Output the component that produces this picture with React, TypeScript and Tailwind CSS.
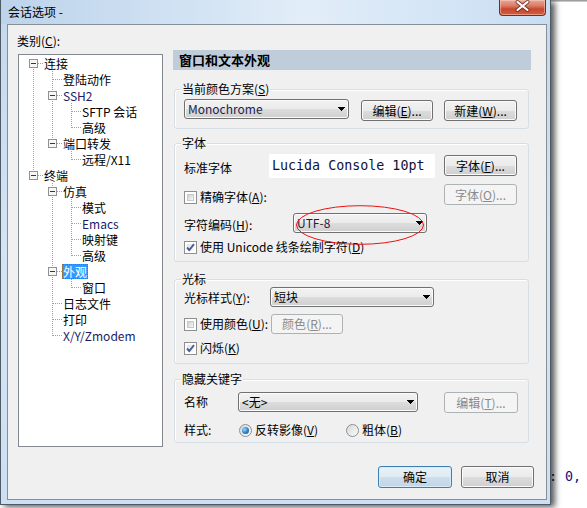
import React from "react";

type CellKind = "line" | "blank" | "tee" | "ell" | "first";

interface TreeItem {
  t: string;
  g: CellKind[];
  c: CellKind;
  exp?: boolean;
  sel?: boolean;
  latin?: boolean;
}

const TREE: TreeItem[] = [
  { t: "连接", g: [], c: "first", exp: true },
  { t: "登陆动作", g: ["line"], c: "tee" },
  { t: "SSH2", g: ["line"], c: "tee", exp: true, latin: true },
  { t: "SFTP 会话", g: ["line", "line"], c: "tee" },
  { t: "高级", g: ["line", "line"], c: "ell" },
  { t: "端口转发", g: ["line"], c: "ell", exp: true },
  { t: "远程/X11", g: ["line", "blank"], c: "ell" },
  { t: "终端", g: [], c: "ell", exp: true },
  { t: "仿真", g: ["blank"], c: "tee", exp: true },
  { t: "模式", g: ["blank", "line"], c: "tee" },
  { t: "Emacs", g: ["blank", "line"], c: "tee", latin: true },
  { t: "映射键", g: ["blank", "line"], c: "tee" },
  { t: "高级", g: ["blank", "line"], c: "ell" },
  { t: "外观", g: ["blank"], c: "tee", exp: true, sel: true },
  { t: "窗口", g: ["blank", "line"], c: "ell" },
  { t: "日志文件", g: ["blank"], c: "tee" },
  { t: "打印", g: ["blank"], c: "tee" },
  { t: "X/Y/Zmodem", g: ["blank"], c: "ell", latin: true },
];

function Cell({ kind, exp }: { kind: CellKind; exp?: boolean }) {
  const s = { stroke: "#a0a0a0", strokeDasharray: "1 1", strokeWidth: 1 };
  return (
    <svg width="19" height="16" className="block flex-none" shapeRendering="crispEdges">
      {(kind === "line" || kind === "tee") && <line x1="9.5" y1="0" x2="9.5" y2="16" {...s} />}
      {kind === "ell" && <line x1="9.5" y1="0" x2="9.5" y2="9" {...s} />}
      {kind === "first" && <line x1="9.5" y1="8" x2="9.5" y2="16" {...s} />}
      {(kind === "tee" || kind === "ell" || kind === "first") && (
        <line x1="10" y1="8.5" x2="19" y2="8.5" {...s} />
      )}
      {exp && (
        <g>
          <rect x="5.5" y="4.5" width="8" height="8" fill="#f6f6f6" stroke="#919191" />
          <line x1="7" y1="8.5" x2="12" y2="8.5" stroke="#24347a" />
        </g>
      )}
    </svg>
  );
}

function Mn({ k }: { k: string }) {
  return (
    <>
      (<span className="underline">{k}</span>)
    </>
  );
}

const btnNormal =
  "flex flex-none items-center justify-center rounded-[3px] border border-[#707070] bg-[linear-gradient(to_bottom,#f2f2f2_0%,#ebebeb_50%,#dddddd_50%,#cfcfcf_100%)] shadow-[inset_0_0_0_1px_#fbfbfb] text-black";
const btnDisabled =
  "flex flex-none items-center justify-center rounded-[3px] border border-[#adb2b5] bg-[#f4f4f4] text-[#8a8a8a]";
const comboCls =
  "relative flex flex-none items-center h-[20px] rounded-[3px] border border-[#707070] bg-[linear-gradient(to_bottom,#f2f2f2_0%,#ebebeb_50%,#dddddd_50%,#cfcfcf_100%)] shadow-[inset_0_0_0_1px_#fbfbfb] pl-[3px]";

function Arrow() {
  return (
    <svg width="7" height="4" className="ml-auto mr-[3px] flex-none" shapeRendering="crispEdges">
      <path d="M0 0H7L3.5 4Z" fill="#000" />
    </svg>
  );
}

function Check({ checked }: { checked?: boolean }) {
  return (
    <div className="relative flex-none w-[13px] h-[13px] border border-[#8e8f8f] bg-white p-[2px]">
      <div
        className={
          checked
            ? "w-full h-full bg-[linear-gradient(135deg,#dfe3e8,#fbfbfb)]"
            : "w-full h-full border border-[#c4c8cc] bg-[linear-gradient(135deg,#cdd1d6,#f7f7f7)]"
        }
      />
      {checked && (
        <svg width="13" height="13" className="absolute left-[-1px] top-[-1px]">
          <path d="M3 6.5L5.3 9L10 3.2" fill="none" stroke="#4a5d93" strokeWidth="1.9" />
        </svg>
      )}
    </div>
  );
}

function Radio({ checked }: { checked?: boolean }) {
  return (
    <div className="flex flex-none items-center justify-center w-[13px] h-[13px] rounded-full border border-[#8e8f8f] bg-[linear-gradient(135deg,#d5d8dc,#fbfbfb)]">
      {checked && (
        <div className="w-[7px] h-[7px] rounded-full bg-[radial-gradient(circle_at_35%_35%,#9ad8f8_0%,#2a7fc4_55%,#0b4f90_100%)]" />
      )}
    </div>
  );
}

function Group({
  label,
  className,
  children,
}: {
  label: React.ReactNode;
  className: string;
  children: React.ReactNode;
}) {
  return (
    <div
      className={
        "relative flex-none rounded-[3px] border border-[#d5dfe5] shadow-[inset_1px_1px_0_#ffffff] " +
        className
      }
    >
      <span className="absolute left-[6px] top-[-9px] px-[1px] bg-[#f0f0f0] leading-[16px] whitespace-nowrap">
        {label}
      </span>
      {children}
    </div>
  );
}

export default function App() {
  return (
    <div className="relative w-[587px] h-[508px] overflow-hidden bg-white font-['Noto_Sans_CJK_SC','Noto_Sans',sans-serif] text-[12px] leading-[16px] text-black">
      {/* background window edge and text */}
      <div className="absolute top-0 left-[551px] right-0 h-[2px] bg-[linear-gradient(to_bottom,#8a8a8a,#dcdcdc)]" />
      <div className="absolute left-[549px] top-[469px] font-['DejaVu_Sans_Mono',monospace] text-[13.33px] leading-[16px] text-[#101080] whitespace-pre">
        : 0,
      </div>

      {/* dialog window */}
      <div className="relative z-10 flex flex-col w-[551px] h-[505px] border-x border-b border-[#4e5a66] bg-[linear-gradient(to_bottom,#c3d8ee,#d3e4f5_50%,#cde0f3)] shadow-[4px_2px_6px_rgba(0,0,0,0.65)]">
        {/* title bar */}
        <div className="flex items-start h-[24px] flex-none bg-[linear-gradient(to_right,#bdd3ea_0%,#d2e3f4_35%,#e2edf8_55%,#d4e5f6_80%,#c9ddf1_100%)]">
          <span className="pl-[7px] mt-[4px] whitespace-nowrap">会话选项 -</span>
          <div className="ml-auto mr-[4px] w-[47px] h-[16px] rounded-b-[4px] border border-t-0 border-[#7c2a1b] bg-[linear-gradient(to_bottom,#e9a898_0%,#d97a63_40%,#c8472c_60%,#d05f40_100%)] shadow-[inset_0_0_0_1px_rgba(255,210,200,0.5)]">
            <svg width="45" height="15" className="block">
              <path d="M17.5 2L27.5 10M27.5 2L17.5 10" stroke="#5a1a0e" strokeWidth="4" strokeLinecap="round" opacity="0.7" />
              <path d="M17.5 2L27.5 10M27.5 2L17.5 10" stroke="#ffffff" strokeWidth="2.2" strokeLinecap="round" />
            </svg>
          </div>
        </div>

        {/* client area */}
        <div className="flex ml-[6px] w-[540px] h-[476px] flex-none border border-[#868e96] bg-[#f0f0f0]">
          {/* left column */}
          <div className="flex flex-col flex-none pl-[10px] pt-[8px]">
            <span className="ml-[-1px] whitespace-nowrap">
              类别<Mn k="C" />:
            </span>
            <div className="mt-[5px] w-[145px] h-[393px] border border-[#828790] bg-white pt-0 pl-[5px] flex flex-col">
              {TREE.map((it, i) => (
                <div key={i} className="flex items-center h-[16px]">
                  {it.g.map((k, j) => (
                    <Cell key={j} kind={k} />
                  ))}
                  <Cell kind={it.c} exp={it.exp} />
                  <span
                    className={
                      it.sel
                        ? "h-[15px] leading-[15px] px-[1px] whitespace-nowrap bg-[#3399ff] text-white outline-1 outline-dotted outline-[#8a6a3a] -outline-offset-1"
                        : it.latin
                        ? "h-[15px] leading-[15px] px-[1px] whitespace-nowrap text-[#1c1c66]"
                        : "h-[15px] leading-[15px] px-[1px] whitespace-nowrap"
                    }
                  >
                    {it.t}
                  </span>
                </div>
              ))}
            </div>
          </div>

          {/* right column */}
          <div className="flex flex-col flex-none ml-[10px] w-[362px] pt-[25px]">
            <div className="flex items-center h-[20px] w-[358px] flex-none bg-[#bfcddb] pl-[6px] font-bold text-[13px]">
              窗口和文本外观
            </div>

            {/* colour scheme */}
            <Group
              label={
                <>
                  当前颜色方案<Mn k="S" />
                </>
              }
              className="mt-[19px] ml-[1px] w-[355px] h-[40px] pl-[9px] pt-[9px] flex items-start"
            >
              <div className={comboCls + " w-[165px] text-[#1c1c50]"}>
                <span>Monochrome</span>
                <Arrow />
              </div>
              <div className={btnNormal + " ml-[12px] mt-[1px] w-[72px] h-[21px]"}>
                编辑<Mn k="E" />...
              </div>
              <div className={btnNormal + " ml-[11px] mt-[1px] w-[73px] h-[21px]"}>
                新建<Mn k="W" />...
              </div>
            </Group>

            {/* font */}
            <Group label="字体" className="mt-[14px] ml-[1px] w-[355px] h-[119px] pl-[9px] flex flex-col">
              <div className="flex mt-[10px] h-[24px]">
                <span className="w-[85px] flex-none mt-[6px]">标准字体</span>
                <div className="flex items-center w-[166px] h-[24px] flex-none bg-white pl-[3px] font-['DejaVu_Sans_Mono',monospace] text-[13.33px] text-[#10103a] whitespace-pre">
                  Lucida Console 10pt
                </div>
                <div className={btnNormal + " ml-[9px] mt-[1px] w-[73px] h-[21px]"}>
                  字体<Mn k="F" />...
                </div>
              </div>
              <div className="flex mt-[6px]">
                <div className="flex items-center w-[260px] h-[16px] mt-[5px] flex-none">
                  <Check />
                  <span className="ml-[3px]">
                    精确字体<Mn k="A" />:
                  </span>
                </div>
                <div className={btnDisabled + " w-[73px] h-[21px]"}>
                  字体<Mn k="O" />...
                </div>
              </div>
              <div className="flex mt-[8px]">
                <span className="w-[109px] flex-none mt-[4px]">
                  字符编码<Mn k="H" />:
                </span>
                <div className={comboCls + " w-[134px] text-[#1c1c50]"}>
                  <span>UTF-8</span>
                  <Arrow />
                  <svg width="132" height="41" className="absolute left-[1px] top-[-9px] pointer-events-none">
                    <ellipse cx="65" cy="20" rx="63.5" ry="19.3" fill="none" stroke="#ee1111" strokeWidth="1" />
                  </svg>
                </div>
              </div>
              <div className="flex items-center h-[16px] mt-[6px]">
                <Check checked />
                <span className="ml-[3px] whitespace-nowrap">
                  使用 Unicode 线条绘制字符<Mn k="D" />
                </span>
              </div>
            </Group>

            {/* cursor */}
            <Group label="光标" className="mt-[17px] ml-[1px] w-[355px] h-[85px] pl-[9px] flex flex-col">
              <div className="flex mt-[7px]">
                <span className="w-[86px] flex-none mt-[3px]">
                  光标样式<Mn k="Y" />:
                </span>
                <div className={comboCls + " w-[164px]"}>
                  <span>短块</span>
                  <Arrow />
                </div>
              </div>
              <div className="flex mt-[7px]">
                <div className="flex items-center w-[87px] h-[16px] mt-[2px] flex-none">
                  <Check />
                  <span className="ml-[3px] whitespace-nowrap">
                    使用颜色<Mn k="U" />:
                  </span>
                </div>
                <div className={btnDisabled + " w-[72px] h-[20px]"}>
                  颜色<Mn k="R" />...
                </div>
              </div>
              <div className="flex items-center h-[16px] mt-[6px]">
                <Check checked />
                <span className="ml-[3px]">
                  闪烁<Mn k="K" />
                </span>
              </div>
            </Group>

            {/* hidden keyword */}
            <Group label="隐藏关键字" className="mt-[15px] ml-[1px] w-[355px] h-[64px] pl-[9px] flex flex-col">
              <div className="flex mt-[12px]">
                <span className="w-[54px] flex-none mt-[2px]">名称</span>
                <div className={comboCls + " w-[180px]"}>
                  <span>&lt;无&gt;</span>
                  <Arrow />
                </div>
                <div className={btnDisabled + " ml-[26px] w-[74px] h-[21px]"}>
                  编辑<Mn k="T" />...
                </div>
              </div>
              <div className="flex items-center h-[16px] mt-[9px]">
                <span className="w-[54px] flex-none">样式:</span>
                <div className="flex items-center w-[107px] ml-[1px] flex-none">
                  <Radio checked />
                  <span className="ml-[3px] whitespace-nowrap">
                    反转影像<Mn k="V" />
                  </span>
                </div>
                <div className="flex items-center">
                  <Radio />
                  <span className="ml-[3px] whitespace-nowrap">
                    粗体<Mn k="B" />
                  </span>
                </div>
              </div>
            </Group>

            {/* OK / Cancel */}
            <div className="flex mt-[23px]">
              <div className="flex flex-none items-center justify-center ml-[205px] w-[74px] h-[22px] rounded-[3px] border border-[#3c7fb1] bg-[linear-gradient(to_bottom,#eaf2f8_0%,#dfeaf3_50%,#cddeeb_50%,#c2d6e6_100%)] shadow-[inset_0_0_0_1px_#d6ecfa]">
                确定
              </div>
              <div className={btnNormal + " ml-[9px] w-[73px] h-[22px]"}>取消</div>
            </div>
          </div>
        </div>
      </div>
    </div>
  );
}
